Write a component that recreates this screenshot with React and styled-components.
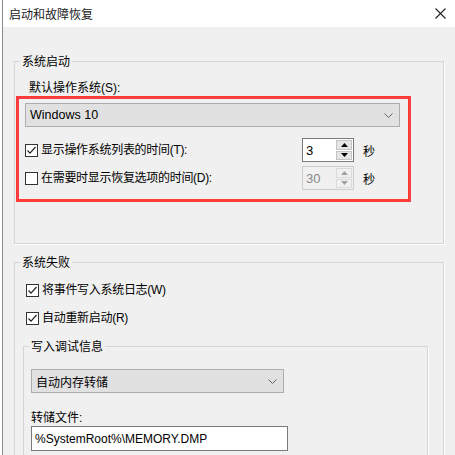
import React from "react";
import styled, { createGlobalStyle } from "styled-components";

const Global = createGlobalStyle`
  html, body { margin: 0; padding: 0; background: #ffffff; }
  body {
    font-family: "Liberation Sans", "Noto Sans CJK SC", sans-serif;
    font-size: 12px;
    color: #000;
  }
  * { box-sizing: border-box; }
`;

const Window = styled.div`
  margin-left: 2px;
  width: 453px;
  height: 455px;
  border-left: 1px solid #8a8a8a;
  display: flex;
  flex-direction: column;
  overflow: hidden;
`;

const TitleBar = styled.div`
  height: 27px;
  flex: none;
  background: #fff;
  display: flex;
  align-items: center;
  justify-content: space-between;
  padding: 0 9px 0 6px;
`;

const Title = styled.span`
  font-family: "Noto Sans CJK SC", sans-serif;
  font-size: 12px;
  line-height: 16px;
  color: #1a1a1a;
`;

const Body = styled.div`
  flex: 1;
  background: #f0f0f0;
  padding: 27px 0 0 11px;
  display: flex;
  flex-direction: column;
`;

const Group = styled.fieldset`
  margin: ${(p) => p.$mt || 0}px 0 0 ${(p) => p.$ml || 0}px;
  padding: 0;
  width: ${(p) => p.$w}px;
  height: ${(p) => (p.$h ? `${p.$h}px` : "auto")};
  flex: none;
  border: 1px solid #d5d5d5;
  box-shadow: 1px 1px 0 #ffffff;
  min-width: 0;
`;

const Legend = styled.legend`
  margin-left: 5px;
  padding: 0 2px;
  font-family: "Noto Sans CJK SC", sans-serif;
  font-size: 12px;
  line-height: 14px;
  height: 14px;
  color: #000;
`;

const GroupContent = styled.div`
  padding-top: ${(p) => p.$pt}px;
  display: flex;
  flex-direction: column;
  align-items: flex-start;
`;

const FieldLabel = styled.div`
  margin: ${(p) => p.$mt || 0}px 0 0 ${(p) => p.$ml || 0}px;
  font-family: "Liberation Sans", "Noto Sans CJK SC", sans-serif;
  font-size: 12px;
  line-height: 16px;
  height: 16px;
`;

const Highlight = styled.div`
  margin-left: 1px;
  width: 395px;
  height: 106px;
  border: 3px solid #ff3b3b;
  padding: 4px 6px 0 6px;
  display: flex;
  flex-direction: column;
`;

const Select = styled.div`
  width: ${(p) => p.$w}px;
  height: 24px;
  margin: ${(p) => p.$mt || 0}px 0 0 ${(p) => p.$ml || 0}px;
  background: #e1e1e1;
  border: 1px solid #adadad;
  display: flex;
  align-items: center;
  justify-content: space-between;
  padding: 0 6px 0 4px;
  font-family: "Liberation Sans", "Noto Sans CJK SC", sans-serif;
  font-size: ${(p) => (p.$cjk ? 12 : 12.5)}px;
  color: #000;
  flex: none;
`;

const OptionRow = styled.div`
  display: flex;
  align-items: center;
  height: 24px;
  margin-top: ${(p) => p.$mt}px;
`;

const CheckLabel = styled.label`
  display: flex;
  align-items: center;
  gap: 3px;
  flex: ${(p) => (p.$grow ? 1 : "none")};
  margin: ${(p) => p.$mt || 0}px 0 0 ${(p) => p.$ml || 0}px;
  height: 16px;
  font-size: 12px;
  line-height: 16px;
  letter-spacing: -0.3px;
  font-family: "Liberation Sans", "Noto Sans CJK SC", sans-serif;
`;

const Box = styled.span`
  width: 13px;
  height: 13px;
  flex: none;
  border: 1px solid #333;
  background: #fff;
  display: flex;
  align-items: center;
  justify-content: center;
`;

const Spin = styled.div`
  width: 52px;
  height: 24px;
  flex: none;
  display: flex;
  border: 1px solid ${(p) => (p.$disabled ? "#cccccc" : "#7a7a7a")};
  background: ${(p) => (p.$disabled ? "#f0f0f0" : "#fff")};
`;

const SpinValue = styled.div`
  flex: 1;
  padding-left: 3px;
  display: flex;
  align-items: center;
  font-family: "Liberation Sans", sans-serif;
  font-size: 13px;
  color: ${(p) => (p.$disabled ? "#8a8a8a" : "#000")};
`;

const SpinButtons = styled.div`
  width: 17px;
  padding: 1px 1px 1px 0;
  display: flex;
  flex-direction: column;
  gap: 1px;
`;

const SpinButton = styled.div`
  flex: 1;
  background: ${(p) => (p.$disabled ? "#f0f0f0" : "#e5e5e5")};
  border: 1px solid ${(p) => (p.$disabled ? "#dadada" : "#c4c4c4")};
  display: flex;
  align-items: center;
  justify-content: center;
`;

const Unit = styled.span`
  width: 48px;
  padding-left: 9px;
  flex: none;
  font-family: "Noto Sans CJK SC", sans-serif;
  font-size: 12px;
`;

const TextInput = styled.div`
  margin-left: 7px;
  width: 257px;
  height: 25px;
  background: #fff;
  border: 1px solid #7a7a7a;
  display: flex;
  align-items: center;
  padding-left: 3px;
  font-family: "Liberation Sans", sans-serif;
  font-size: 12px;
`;

const Chevron = () => (
  <svg width="9" height="5" viewBox="0 0 9 5">
    <polyline points="0.5,0.5 4.5,4.5 8.5,0.5" fill="none" stroke="#606060" strokeWidth="1" />
  </svg>
);

const Check = () => (
  <svg width="11" height="11" viewBox="0 0 11 11">
    <polyline points="1.5,5.5 4,8.2 9.5,2" fill="none" stroke="#222" strokeWidth="1.2" />
  </svg>
);

const Arrow = ({ up, disabled }) => (
  <svg width="7" height="4" viewBox="0 0 7 4">
    <polygon
      points={up ? "0,4 7,4 3.5,0" : "0,0 7,0 3.5,4"}
      fill={disabled ? "#a0a0a0" : "#000"}
    />
  </svg>
);

const CheckBox = ({ checked, children, ...rest }) => (
  <CheckLabel {...rest}>
    <Box>{checked && <Check />}</Box>
    <span>{children}</span>
  </CheckLabel>
);

const SpinBox = ({ value, disabled }) => (
  <Spin $disabled={disabled}>
    <SpinValue $disabled={disabled}>{value}</SpinValue>
    <SpinButtons>
      <SpinButton $disabled={disabled}>
        <Arrow up disabled={disabled} />
      </SpinButton>
      <SpinButton $disabled={disabled}>
        <Arrow disabled={disabled} />
      </SpinButton>
    </SpinButtons>
  </Spin>
);

export default function App() {
  return (
    <>
      <Global />
      <Window>
        <TitleBar>
          <Title>启动和故障恢复</Title>
          <svg width="11" height="11" viewBox="0 0 11 11">
            <path d="M0.5 0.5 L10.5 10.5 M10.5 0.5 L0.5 10.5" stroke="#222" strokeWidth="1.1" />
          </svg>
        </TitleBar>
        <Body>
          <Group $w={430} $h={190}>
            <Legend>系统启动</Legend>
            <GroupContent $pt={12}>
              <FieldLabel $ml={14}>默认操作系统(S):</FieldLabel>
              <Highlight>
                <Select $w={375}>
                  <span>Windows 10</span>
                  <Chevron />
                </Select>
                <OptionRow $mt={11}>
                  <CheckBox checked $grow>显示操作系统列表的时间(T):</CheckBox>
                  <SpinBox value="3" />
                  <Unit>秒</Unit>
                </OptionRow>
                <OptionRow $mt={4}>
                  <CheckBox $grow>在需要时显示恢复选项的时间(D):</CheckBox>
                  <SpinBox value="30" disabled />
                  <Unit>秒</Unit>
                </OptionRow>
              </Highlight>
            </GroupContent>
          </Group>
          <Group $w={430} $mt={11}>
            <Legend>系统失败</Legend>
            <GroupContent $pt={13}>
              <CheckBox checked $ml={11}>将事件写入系统日志(W)</CheckBox>
              <CheckBox checked $ml={11} $mt={12}>自动重新启动(R)</CheckBox>
              <Group $w={405} $ml={8} $mt={13}>
                <Legend>写入调试信息</Legend>
                <GroupContent $pt={16}>
                  <Select $w={253} $ml={7} $cjk>
                    <span>自动内存转储</span>
                    <Chevron />
                  </Select>
                  <FieldLabel $ml={7} $mt={17}>转储文件:</FieldLabel>
                  <TextInput>%SystemRoot%\MEMORY.DMP</TextInput>
                  <FieldLabel $mt={20}>&nbsp;</FieldLabel>
                </GroupContent>
              </Group>
            </GroupContent>
          </Group>
        </Body>
      </Window>
    </>
  );
}
